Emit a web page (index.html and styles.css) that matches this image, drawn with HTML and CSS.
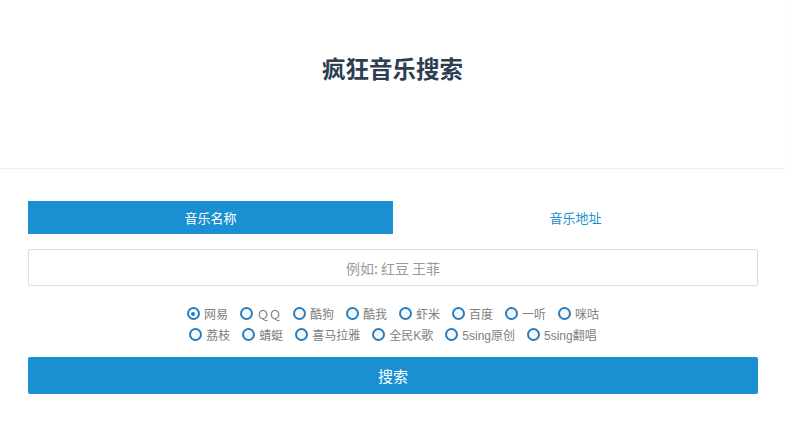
FILE: index.html
```html
<!DOCTYPE html>
<html lang="zh-CN">
<head>
  <meta charset="UTF-8">
  <meta name="viewport" content="width=device-width, initial-scale=1.0">
  <title>疯狂音乐搜索</title>
  <link rel="stylesheet" href="styles.css">
</head>
<body>
  <div class="page">
    <div class="header">
      <h1 class="title">疯狂音乐搜索</h1>
    </div>
    <div class="main">
      <div class="tabs">
        <span class="tab active">音乐名称</span>
        <span class="tab">音乐地址</span>
      </div>
      <input class="search-input" type="text" placeholder="例如: 红豆 王菲">
      <div class="sources">
        <div class="row">
          <label class="radio checked"><i></i>网易</label>
          <label class="radio"><i></i>ＱＱ</label>
          <label class="radio"><i></i>酷狗</label>
          <label class="radio"><i></i>酷我</label>
          <label class="radio"><i></i>虾米</label>
          <label class="radio"><i></i>百度</label>
          <label class="radio"><i></i>一听</label>
          <label class="radio"><i></i>咪咕</label>
        </div>
        <div class="row">
          <label class="radio"><i></i>荔枝</label>
          <label class="radio"><i></i>蜻蜓</label>
          <label class="radio"><i></i>喜马拉雅</label>
          <label class="radio"><i></i>全民K歌</label>
          <label class="radio"><i></i>5sing原创</label>
          <label class="radio"><i></i>5sing翻唱</label>
        </div>
      </div>
      <button class="search-btn">搜索</button>
    </div>
  </div>
</body>
</html>
```

FILE: styles.css
```css
body {
  margin: 0;
  font-family: "Noto Sans CJK SC", "Liberation Sans", sans-serif;
  background: #fff;
}
div.page {
  width: 785px;
}
div.header {
  height: 168px;
  border-bottom: 1px solid #eee;
  box-shadow: 0 1px 2px rgba(0, 0, 0, 0.03);
  display: flex;
  justify-content: center;
}
h1.title {
  margin: 52px 0 0;
  font-size: 23.5px;
  line-height: 32px;
  color: #2c3e50;
  font-weight: bold;
}
div.main {
  padding: 32px 27px 0 28px;
}
div.tabs {
  display: flex;
  height: 33px;
}
div.tabs .tab {
  flex: 1;
  display: flex;
  align-items: center;
  justify-content: center;
  font-size: 13px;
  color: #1a8fd1;
}
div.tabs .tab.active {
  background-color: #1a8fd1;
  color: #fff;
}
input.search-input {
  display: block;
  box-sizing: border-box;
  width: 100%;
  height: 37px;
  margin-top: 15px;
  border: 1px solid #ddd;
  border-radius: 2px;
  text-align: center;
  font-family: inherit;
  font-size: 14px;
}
input.search-input::placeholder {
  color: #999;
}
div.sources {
  margin-top: 17px;
}
div.sources .row {
  display: flex;
  justify-content: center;
  height: 21px;
  align-items: center;
}
label.radio {
  display: flex;
  align-items: center;
  margin: 0 6px;
  font-family: "Liberation Sans", "Noto Sans CJK SC", sans-serif;
  font-size: 12px;
  color: #808080;
}
label.radio i {
  box-sizing: border-box;
  width: 13px;
  height: 13px;
  margin-right: 4px;
  border: 2px solid #2a7dbd;
  border-radius: 50%;
  background: #f4f9fd;
  position: relative;
}
label.radio.checked i::after {
  content: "";
  position: absolute;
  left: 2.5px;
  top: 2.5px;
  width: 4px;
  height: 4px;
  border-radius: 50%;
  background: #2a7dbd;
}
button.search-btn {
  display: block;
  width: 100%;
  height: 37px;
  margin-top: 12px;
  border: none;
  border-radius: 2px;
  background-color: #1a8fd1;
  color: #fff;
  font-family: inherit;
  font-size: 15px;
}
```
